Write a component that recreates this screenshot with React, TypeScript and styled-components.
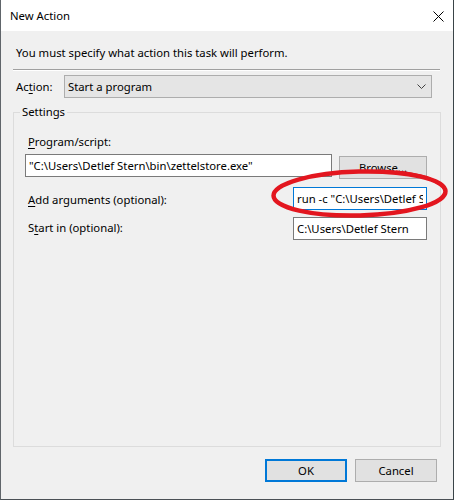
import { createGlobalStyle, styled } from "styled-components";

const GlobalStyle = createGlobalStyle`
  html, body {
    margin: 0;
    padding: 0;
    background: #2f3b40;
  }
  * {
    box-sizing: border-box;
  }
`;

const uiFont = `"Noto Sans", "Open Sans", "Liberation Sans", sans-serif`;

const Window = styled.div`
  position: relative;
  width: 454px;
  height: 500px;
  display: flex;
  flex-direction: column;
  background: #f0f0f0;
  border-left: 1px solid #60656a;
  border-right: 1px solid #3a4448;
  border-bottom: 1px solid #4a5055;
  font-family: ${uiFont};
  font-size: 11.3px;
  line-height: 16px;
  color: #000;
`;

const TitleBar = styled.div`
  height: 31px;
  flex: none;
  display: flex;
  align-items: center;
  justify-content: space-between;
  padding: 0 9px 0 9px;
  background: #fff;
`;

const Title = styled.span`
  padding-top: 1px;
`;

const CloseIcon = styled.svg`
  display: block;
  margin-top: 1px;
`;

const Body = styled.div`
  flex: 1;
  display: flex;
  flex-direction: column;
  padding: 14px 12px 0 12px;
`;

const Intro = styled.div`
  margin-left: 3px;
`;

const Separator = styled.div`
  margin-top: 8px;
  width: 427px;
  border-top: 1px solid #a0a0a0;
  border-bottom: 1px solid #ffffff;
`;

const ActionRow = styled.div`
  margin-top: 4px;
  display: flex;
  align-items: center;
`;

const ActionLabel = styled.label`
  width: 51px;
  padding: 1px 0 0 3px;
  flex: none;
`;

const Select = styled.div`
  width: 368px;
  height: 23px;
  display: flex;
  align-items: center;
  justify-content: space-between;
  padding: 0 5px 0 3px;
  background: #e5e5e5;
  border: 1px solid #adadad;
`;

const Group = styled.fieldset`
  margin: 6px 0 0 0;
  width: 428px;
  height: 343px;
  padding: 14px 13px 0 11px;
  border: 1px solid #dcdcdc;
  min-width: 0;
`;

const Legend = styled.legend`
  padding: 0 2px;
  margin-left: -5px;
  line-height: 16px;
`;

const FieldLabel = styled.label<{ $shift?: number }>`
  display: block;
  margin-left: 3px;
  margin-top: ${(p) => p.$shift ?? 0}px;
`;

const ProgramRow = styled.div`
  margin-top: 4px;
  display: flex;
  align-items: flex-start;
  gap: 7px;
`;

const Field = styled.input<{ $width: number; $focused?: boolean }>`
  width: ${(p) => p.$width}px;
  height: 23px;
  margin: 0;
  padding: 0 3px;
  font-family: ${uiFont};
  font-size: 11.3px;
  color: #000;
  background: #fff;
  border: 1px solid ${(p) => (p.$focused ? "#0078d7" : "#7a7a7a")};
  outline: none;
  border-radius: 0;
`;

const OptionRow = styled.div<{ $gap: number }>`
  margin-top: ${(p) => p.$gap}px;
  display: flex;
  align-items: center;
  justify-content: space-between;
`;

const Button = styled.button<{ $default?: boolean; $width: number }>`
  width: ${(p) => p.$width}px;
  height: 23px;
  margin: 0;
  padding: 0;
  font-family: ${uiFont};
  font-size: 11.3px;
  color: #000;
  background: #e1e1e1;
  border: ${(p) => (p.$default ? "2px solid #0078d7" : "1px solid #adadad")};
  border-radius: 0;
`;

const BrowseButton = styled(Button)`
  margin-top: 2px;
`;

const Footer = styled.div`
  margin-top: 12px;
  padding-right: 4px;
  display: flex;
  justify-content: flex-end;
  gap: 8px;
`;

const Key = styled.span`
  text-decoration: underline;
  text-underline-offset: 2px;
`;

const Scribble = styled.svg`
  position: absolute;
  left: 0;
  top: 0;
  pointer-events: none;
`;

export default function App() {
  return (
    <>
      <GlobalStyle />
      <Window>
        <TitleBar>
          <Title>New Action</Title>
          <CloseIcon width="11" height="11" viewBox="0 0 11 11">
            <path d="M0.5 0.5 L10.5 10.5 M10.5 0.5 L0.5 10.5" stroke="#000" strokeWidth="1" />
          </CloseIcon>
        </TitleBar>
        <Body>
          <Intro>You must specify what action this task will perform.</Intro>
          <Separator />
          <ActionRow>
            <ActionLabel>
              Ac<Key>t</Key>ion:
            </ActionLabel>
            <Select>
              <span>Start a program</span>
              <svg width="9" height="5" viewBox="0 0 9 5">
                <path d="M0.5 0.5 L4.5 4.5 L8.5 0.5" fill="none" stroke="#404040" strokeWidth="1" />
              </svg>
            </Select>
          </ActionRow>
          <Group>
            <Legend>Settings</Legend>
            <FieldLabel>
              <Key>P</Key>rogram/script:
            </FieldLabel>
            <ProgramRow>
              <Field $width={307} readOnly defaultValue={'"C:\\Users\\Detlef Stern\\bin\\zettelstore.exe"'} />
              <BrowseButton $width={88}>Browse...</BrowseButton>
            </ProgramRow>
            <OptionRow $gap={8}>
              <FieldLabel $shift={2}>
                <Key>A</Key>dd arguments (optional):
              </FieldLabel>
              <Field $width={134} $focused readOnly defaultValue={'run -c "C:\\Users\\Detlef Stern\\zettel"'} />
            </OptionRow>
            <OptionRow $gap={7}>
              <FieldLabel $shift={-1}>
                S<Key>t</Key>art in (optional):
              </FieldLabel>
              <Field $width={134} readOnly defaultValue={"C:\\Users\\Detlef Stern"} />
            </OptionRow>
          </Group>
          <Footer>
            <Button $default $width={82}>OK</Button>
            <Button $width={82}>Cancel</Button>
          </Footer>
        </Body>
        <Scribble width="454" height="500" viewBox="0 0 454 500">
          <ellipse
            cx="358.5"
            cy="193.5"
            rx="86"
            ry="22"
            transform="rotate(-1.5 358.5 193.5)"
            fill="none"
            stroke="#e3161f"
            strokeWidth="4.5"
          />
          <path
            d="M395 172 C420 174 440 181 444 190"
            fill="none"
            stroke="#e3161f"
            strokeWidth="3"
          />
        </Scribble>
      </Window>
    </>
  );
}
